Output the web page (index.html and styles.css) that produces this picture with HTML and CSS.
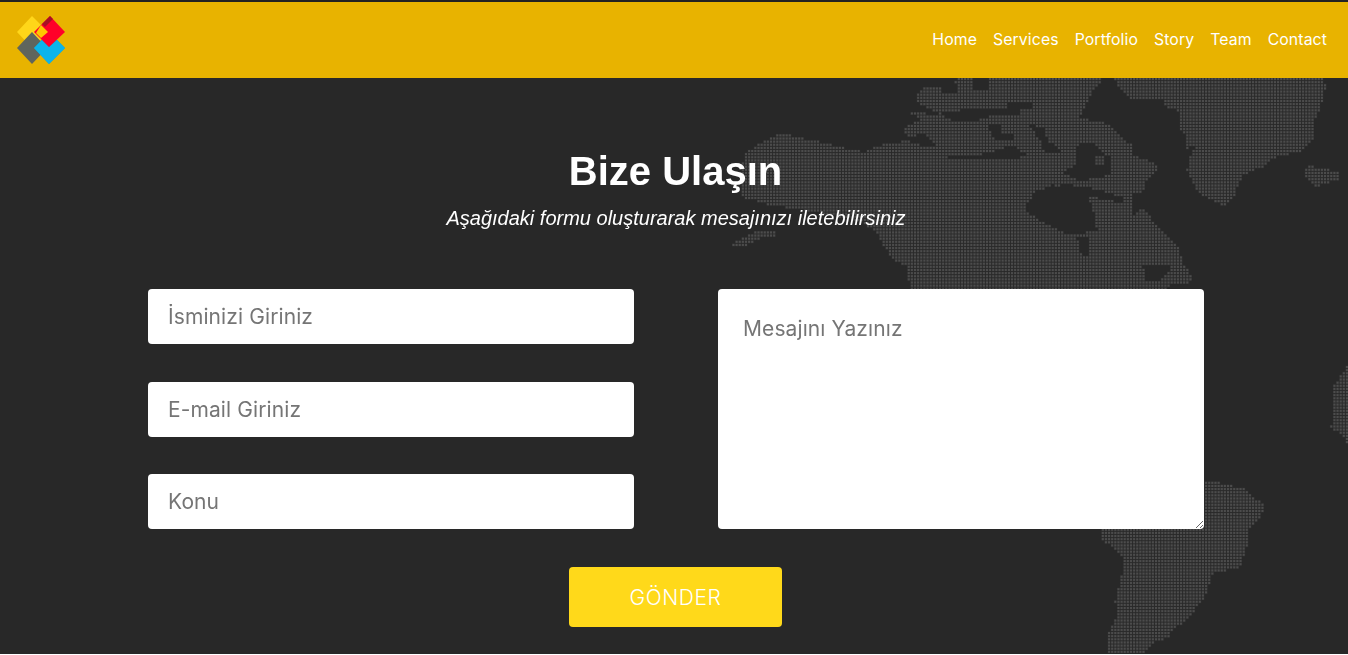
FILE: index.html
```html
<!DOCTYPE html>
<html lang="tr">
<head>
<meta charset="utf-8">
<title>Bize Ulaşın</title>
<link rel="stylesheet" href="styles.css">
</head>
<body>
<header class="topbar">
  <a class="logo" href="#" aria-label="Logo">
    <svg width="66" height="76" viewBox="0 2 66 76">
      <polygon fill="#ffd619" points="32,16 48,32 32,48 17,32"/>
      <polygon fill="#5f655d" points="32,32 47,48 32,64 17,48"/>
      <polygon fill="#0b9fc4" points="49,32 65,48 49,64 34,48"/>
      <polygon fill="#0cb4ea" points="42,40 49,47 57,40 65,48 49,64 34,48"/>
      <polygon fill="#ff0029" points="50,16 65,32 49,47 34,32"/>
      <polygon fill="#a80f24" points="50,16 42,24 45,27 53,19"/>
      <polygon fill="#ffc800" points="41,25 48,32 41,38 36,33"/>
    </svg>
  </a>
  <nav class="menu">
    <a href="#">Home</a>
    <a href="#">Services</a>
    <a href="#">Portfolio</a>
    <a href="#">Story</a>
    <a href="#">Team</a>
    <a href="#">Contact</a>
  </nav>
</header>
<main class="contact">
  <canvas class="map" id="map" width="1348" height="576"></canvas>
  <div class="inner">
    <h1 class="title">Bize Ulaşın</h1>
    <p class="subtitle">Aşağıdaki formu oluşturarak mesajınızı iletebilirsiniz</p>
    <form class="form">
      <div class="fields">
        <input class="field" type="text" placeholder="İsminizi Giriniz">
        <input class="field" type="text" placeholder="E-mail Giriniz">
        <input class="field" type="text" placeholder="Konu">
      </div>
      <textarea class="message" placeholder="Mesajını Yazınız"></textarea>
      <button class="send" type="button">GÖNDER</button>
    </form>
  </div>
</main>
<script src="map.js"></script>
</body>
</html>
```
FILE: styles.css
```css
html {
  background: #fff;
}
body {
  margin: 0;
  height: 654px;
  overflow: hidden;
  display: flex;
  flex-direction: column;
  font-family: Inter, "Open Sans", sans-serif;
}
.topbar {
  height: 76px;
  flex: none;
  border-top: 2px solid #222;
  background: #e8b300;
  display: flex;
  align-items: center;
  justify-content: space-between;
  padding-right: 21px;
}
.logo {
  display: block;
  height: 76px;
}
.logo svg {
  display: block;
}
.menu {
  display: flex;
  gap: 16px;
  padding-bottom: 2px;
}
.menu a {
  color: #fff;
  text-decoration: none;
  font-size: 15.8px;
  font-weight: 400;
  letter-spacing: 0.1px;
}
.contact {
  position: relative;
  flex: 1;
  background: #282828;
  padding: 70px 0 0 148px;
  overflow: hidden;
}
.map {
  position: absolute;
  top: 0;
  left: 0;
}
.inner {
  position: relative;
  width: 1056px;
  text-align: center;
}
.title {
  margin: 0 1px 0 0;
  font: bold 40px/46px "Liberation Sans", Arial, sans-serif;
  color: #fff;
}
.subtitle {
  margin: 12px 0 0;
  font: italic 20px/24px "Liberation Sans", Arial, sans-serif;
  color: #fff;
}
.form {
  margin-top: 59px;
  display: grid;
  grid-template-columns: 486px 486px;
  column-gap: 84px;
  row-gap: 38px;
}
.fields {
  display: flex;
  flex-direction: column;
  gap: 37.5px;
}
.field,
.message {
  box-sizing: border-box;
  display: block;
  width: 100%;
  border: 0;
  border-radius: 4px;
  background: #fff;
  font-family: Inter, "Open Sans", sans-serif;
  font-size: 21px;
  letter-spacing: 0.1px;
  color: #333;
  outline: 0;
}
.field {
  height: 55px;
  padding: 0 20px;
}
.message {
  height: 100%;
  padding: 27px 25px;
  line-height: 26px;
}
.field::placeholder,
.message::placeholder {
  color: #757575;
  opacity: 1;
}
.send {
  grid-column: 1 / -1;
  justify-self: center;
  width: 213px;
  height: 60px;
  margin-right: 1px;
  border: 0;
  border-radius: 4px;
  background: #ffd91a;
  color: #fff;
  font-family: Inter, "Open Sans", sans-serif;
  font-size: 21px;
  font-weight: 300;
  letter-spacing: 0.6px;
}
```
FILE: map.js
```js
// Dotted world map: each grid cell inside a land shape and outside a sea shape gets a dot.
var PITCH = 3.13;
var TOP = 78;
var LAND = [
  [957,78,1103,78,1093,91,1080,118,1093,121,1107,123,1113,130,1132,145,1133,156,1143,158,1157,165,1157,171,1147,178,1145,191,1133,195,1133,215,1143,208,1157,225,1180,248,1182,261,1193,278,1192,282,1167,286,1167,289,910,289,907,267,890,257,877,233,863,223,830,215,770,205,742,197,743,153,780,133,820,142,863,152,880,145,910,140,903,128,920,120,908,111,940,115,915,101,915,95,923,88,953,86],
  [733,248,733,243,753,232,777,230,777,235,755,240,745,248],
  [1112,78,1322,78,1327,88,1323,95,1320,111,1313,121,1313,141,1300,151,1273,158,1267,165,1243,175,1233,198,1223,206,1200,195,1187,171,1188,158,1197,146,1187,148,1187,138,1180,131,1178,111,1167,108,1163,100,1133,100,1120,88],
  [1303,168,1312,166,1325,169,1339,171,1339,180,1325,184,1318,187,1310,183,1305,177],
  [1100,528,1204,480,1223,483,1247,490,1263,505,1262,515,1250,527,1247,547,1240,568,1213,573,1207,593,1190,617,1177,627,1167,638,1153,643,1143,654,1107,654,1108,632,1117,617,1115,600,1122,573,1122,557,1100,537],
  [1348,365,1341,375,1331,390,1334,413,1331,427,1344,437,1348,447]
];
var SEA = [
  [923,133,937,148,925,146,910,143,910,138],
  [947,156,973,156,990,153,1013,145,1027,156,1013,159,987,159,973,158,947,160],
  [942,113,963,110,1020,110,1020,116,990,116,967,123,950,120],
  [1007,101,1033,101,1033,110,1007,110],
  [973,78,987,78,987,90,973,90],
  [943,85,957,85,957,93,943,93],
  [1030,125,1043,128,1047,140,1060,150,1060,153,1045,153,1040,140],
  [987,123,1000,123,1002,140,995,140],
  [995,133,1013,133,1013,141,995,141],
  [1077,145,1093,143,1110,158,1110,175,1080,181,1062,173,1077,165],
  [1060,183,1100,190,1123,198,1123,203,1095,197,1060,188],
  [1025,205,1037,191,1053,185,1087,195,1093,211,1097,231,1067,235,1050,225,1027,213],
  [1077,238,1090,238,1090,255,1085,257,1080,250],
  [1143,265,1170,265,1170,270,1158,281,1146,281]
];
var ISLANDS = [[1096,157,1104,157,1104,164,1096,164]];

function inside(poly, x, y) {
  var hit = false;
  for (var i = 0, j = poly.length - 2; i < poly.length; j = i, i += 2) {
    var xi = poly[i], yi = poly[i + 1], xj = poly[j], yj = poly[j + 1];
    if ((yi > y) !== (yj > y) && x < (xj - xi) * (y - yi) / (yj - yi) + xi) hit = !hit;
  }
  return hit;
}
function any(list, x, y) {
  return list.some(function (p) { return inside(p, x, y); });
}

var ctx = document.getElementById('map').getContext('2d');
for (var row = 0; row * PITCH < 576; row++) {
  for (var col = 0; col * PITCH < 1348; col++) {
    var x = col * PITCH, y = row * PITCH;
    var cx = x + 1, cy = y + 1 + TOP;
    if (any(LAND, cx, cy) && (!any(SEA, cx, cy) || any(ISLANDS, cx, cy))) {
      ctx.fillStyle = '#2e2e2e';
      ctx.fillRect(x - 0.5, y - 0.5, PITCH, PITCH);
      ctx.fillStyle = '#4c4c4c';
      ctx.fillRect(x, y, 2.1, 2.1);
    }
  }
}
```
